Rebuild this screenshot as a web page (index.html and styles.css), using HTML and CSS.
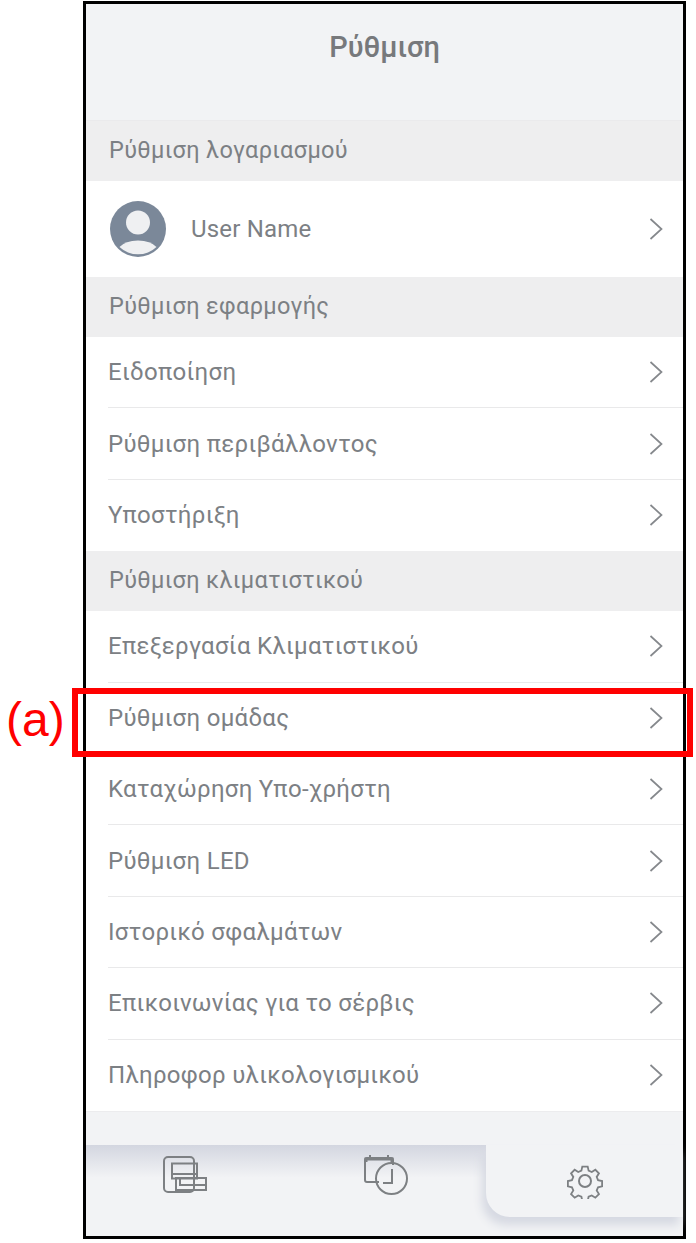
FILE: index.html
```html
<!DOCTYPE html>
<html lang="el">
<head>
<meta charset="utf-8">
<title>Ρύθμιση</title>
<link rel="stylesheet" href="styles.css">
</head>
<body>
<main class="phone">
  <header class="title-bar"><h1 class="title">Ρύθμιση</h1></header>
  <h2 class="section">Ρύθμιση λογαριασμού</h2>
  <div class="user-row">
    <svg class="avatar" viewBox="0 0 56 56"><circle cx="28" cy="28" r="28" fill="#7b8899"/><circle cx="28" cy="21.5" r="12" fill="#eff0f2"/><path d="M9.5 46a21 12.5 0 0 1 37 0a27 27 0 0 1-37 0z" fill="#eff0f2"/></svg>
    <span class="user-name">User Name</span>
    <svg class="chev" viewBox="0 0 14 24"><path d="M1.5 2l11 10-11 10"/></svg>
  </div>
  <h2 class="section">Ρύθμιση εφαρμογής</h2>
  <ul class="list">
    <li class="row"><span>Ειδοποίηση</span><svg class="chev" viewBox="0 0 14 24"><path d="M1.5 2l11 10-11 10"/></svg></li>
    <li class="row"><span>Ρύθμιση περιβάλλοντος</span><svg class="chev" viewBox="0 0 14 24"><path d="M1.5 2l11 10-11 10"/></svg></li>
    <li class="row"><span>Υποστήριξη</span><svg class="chev" viewBox="0 0 14 24"><path d="M1.5 2l11 10-11 10"/></svg></li>
  </ul>
  <h2 class="section">Ρύθμιση κλιματιστικού</h2>
  <ul class="list">
    <li class="row"><span>Επεξεργασία Κλιματιστικού</span><svg class="chev" viewBox="0 0 14 24"><path d="M1.5 2l11 10-11 10"/></svg></li>
    <li class="row"><span>Ρύθμιση ομάδας</span><svg class="chev" viewBox="0 0 14 24"><path d="M1.5 2l11 10-11 10"/></svg></li>
    <li class="row"><span>Καταχώρηση Υπο-χρήστη</span><svg class="chev" viewBox="0 0 14 24"><path d="M1.5 2l11 10-11 10"/></svg></li>
    <li class="row"><span>Ρύθμιση LED</span><svg class="chev" viewBox="0 0 14 24"><path d="M1.5 2l11 10-11 10"/></svg></li>
    <li class="row"><span>Ιστορικό σφαλμάτων</span><svg class="chev" viewBox="0 0 14 24"><path d="M1.5 2l11 10-11 10"/></svg></li>
    <li class="row"><span>Επικοινωνίας για το σέρβις</span><svg class="chev" viewBox="0 0 14 24"><path d="M1.5 2l11 10-11 10"/></svg></li>
    <li class="row"><span>Πληροφορ υλικολογισμικού</span><svg class="chev" viewBox="0 0 14 24"><path d="M1.5 2l11 10-11 10"/></svg></li>
  </ul>
  <nav class="tabbar">
    <div class="tab tab-left">
      <svg class="ico" viewBox="0 0 46 38"><rect x="1" y="1" width="30" height="35" rx="4"/><rect x="9" y="7.5" width="25" height="15"/><path d="M9 18h25"/><rect x="14" y="16" width="25" height="0" /><rect x="13" y="22" width="30" height="12"/><rect x="17" y="22" width="26" height="7"/></svg>
    </div>
    <div class="tab tab-mid">
      <svg class="ico ico-clock" viewBox="0 0 46 42"><path d="M16 28H4a2 2 0 0 1-2-2V6a2 2 0 0 1 2-2h24a2 2 0 0 1 2 2v5"/><path d="M3 8V5h26v3" stroke-width="3"/><path d="M7 1v5M25 1v5"/><circle cx="28.500" cy="24.500" r="15.500"/><path d="M29 15v14h-9"/></svg>
    </div>
    <div class="tab tab-active">
      <svg class="ico gear" viewBox="0 0 36 36"><circle cx="18" cy="18" r="6"/><path d="M15 2h6l1 4.500 3.500 1.500 4-2.500 4 4-2.500 4 1.500 3.500 4.500 1v6l-4.500 1-1.500 3.500 2.500 4-4 4-4-2.500-3.500 1.500-1 4.500h-6l-1-4.500-3.500-1.500-4 2.500-4-4 2.500-4-1.500-3.500-4.500-1v-6l4.500-1 1.500-3.500-2.500-4 4-4 4 2.500 3.500-1.500z" transform="translate(1.800 1.800) scale(.9)"/></svg>
    </div>
  </nav>
  <div class="highlight"></div>
</main>
<span class="callout">(a)</span>
</body>
</html>
```
FILE: styles.css
```css
* { box-sizing: border-box; }
html, body { margin: 0; padding: 0; background: #fff; }
body { position: relative; width: 696px; height: 1243px; overflow: hidden; font-family: Roboto, "Noto Sans", sans-serif; }
.phone { position: relative; width: 603px; height: 1238px; margin: 1px 0 0 83px; border: 3px solid #000; border-right-width: 3px; background: #fff; display: flex; flex-direction: column; }
.title-bar { height: 117px; background: #f2f3f5; border-bottom: 1px solid #eaeaec; padding-top: 24px; text-align: center; }
.title { margin: 0; font-size: 29px; line-height: 38px; font-weight: 500; color: #77797c; }
.section { margin: 0; height: 60px; background: #eeeeef; padding-left: 23px; font-size: 23.500px; font-weight: 400; line-height: 58px; color: #7c8084; letter-spacing: .35px; }
.user-row { height: 96px; display: flex; align-items: center; padding: 0 20px 0 24px; background: #fff; }
.avatar { width: 56px; height: 56px; flex: none; }
.user-name { margin-left: 25px; flex: 1; font-size: 24px; color: #7c8084; letter-spacing: .2px; }
.list { margin: 0; padding: 0 0 0 22px; list-style: none; background: #fff; }
.row { height: 71.400px; display: flex; align-items: center; justify-content: space-between; padding-right: 20px; border-bottom: 1px solid #e9e9ea; font-size: 24px; color: #7c8084; letter-spacing: .3px; }
.list .row:last-child { border-bottom: 0; }
.chev { width: 14px; height: 24px; flex: none; fill: none; stroke: #85888c; stroke-width: 1.700; }
.tabbar { flex: 1; display: flex; background: #f2f3f5; padding-top: 33px; border-top: 1px solid #ececee; }
.tab { display: flex; justify-content: center; align-items: center; }
.tab-left { width: 200px; height: 91px; padding-bottom: 30px; background: linear-gradient(#d3d6e0, #f2f3f5 36%); }
.tab-mid { width: 200px; height: 91px; padding-bottom: 30px; background: linear-gradient(#d3d6e0, #f2f3f5 36%); border-top-right-radius: 0; }
.tab-active { position: relative; flex: 1; height: 72px; padding-bottom: 0; background: #f2f3f5; border-radius: 0 0 0 24px; box-shadow: -4px 8px 10px #d6d9e2; }
.ico { width: 46px; height: 38px; fill: none; stroke: #7d8083; stroke-width: 2; }
.ico-clock { height: 42px; }
.gear { width: 36px; height: 36px; }
.highlight { position: absolute; left: -14px; top: 684px; width: 621px; height: 69px; border: 6px solid #f00; }
.callout { position: absolute; left: 6px; top: 692px; font-family: "Liberation Sans", Arial, sans-serif; font-size: 48px; line-height: 56px; color: #f00; }
```
